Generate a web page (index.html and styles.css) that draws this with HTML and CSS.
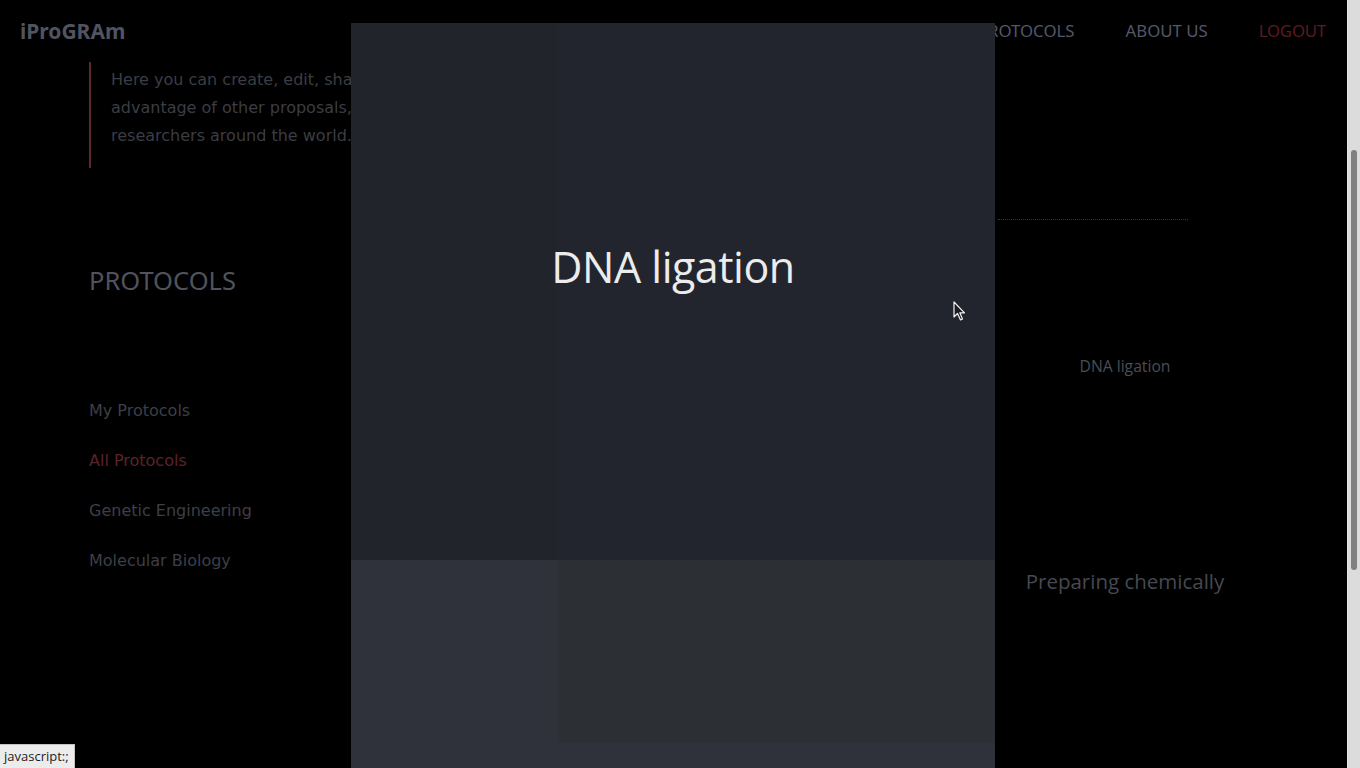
FILE: index.html
```html
<!DOCTYPE html>
<html lang="en">
<head>
<meta charset="utf-8">
<title>iProGRAm - Protocols</title>
<link rel="stylesheet" href="styles.css">
</head>
<body>
<div class="page">
  <header class="topbar">
    <a class="logo" href="#">iProGRAm</a>
    <nav class="mainnav">
      <a href="#">PROTOCOLS</a>
      <a href="#">ABOUT US</a>
      <a href="#" class="logout">LOGOUT</a>
    </nav>
  </header>
  <main class="main">
    <aside class="side">
      <blockquote class="intro">Here you can create, edit, share and take advantage of other proposals, made by other researchers around the world.</blockquote>
      <h2 class="side-title">PROTOCOLS</h2>
      <ul class="side-links">
        <li><a href="#">My Protocols</a></li>
        <li><a href="#" class="active">All Protocols</a></li>
        <li><a href="#">Genetic Engineering</a></li>
        <li><a href="#">Molecular Biology</a></li>
      </ul>
    </aside>
    <section class="middle"></section>
    <section class="cards">
      <div class="dots"></div>
      <div class="card card-first"><span class="card-title">DNA ligation</span></div>
      <div class="card card-second"><span class="card-title big">Preparing chemically</span></div>
    </section>
  </main>
</div>
<div class="scrollbar"><div class="thumb"></div></div>

<div class="modal">
  <div class="modal-top">
    <h1 class="modal-title">DNA ligation</h1>
  </div>
  <div class="modal-bottom">
    <div class="modal-row">
      <div class="modal-left"></div>
      <div class="modal-right"></div>
    </div>
  </div>
</div>

<svg class="cursor" width="14" height="21" viewBox="0 0 14 21">
  <path d="M1 1 L1 16 L4.5 12.5 L7.5 19 L9.5 18 L6.8 11.8 L11.5 11.8 Z" fill="#1c1d22" stroke="#f2f2f2" stroke-width="1.2" stroke-linejoin="round"/>
</svg>

<div class="status">javascript:;</div>
</body>
</html>
```

FILE: styles.css
```css
html, body {
  margin: 0;
  padding: 0;
  height: 100%;
}
body {
  background: #000;
  display: flex;
  overflow: hidden;
  font-family: "DejaVu Sans", sans-serif;
}
a { text-decoration: none; }

.page {
  flex: 1;
  min-width: 0;
}

.scrollbar {
  width: 13px;
  height: 768px;
  background: #dcdcdc;
  border-left: 1px solid #e6e6e6;
  box-sizing: border-box;
  padding-top: 150px;
}
.thumb {
  width: 6px;
  margin-left: 3px;
  height: 420px;
  background: #808080;
  border-radius: 3px;
}

.topbar {
  height: 61px;
  display: flex;
  align-items: center;
  justify-content: space-between;
  padding: 0 21px 0 20px;
}
.logo {
  font-family: "Noto Sans", sans-serif;
  font-weight: 700;
  font-size: 21px;
  color: #505461;
  letter-spacing: 0;
}
.mainnav {
  display: flex;
  gap: 51px;
}
.mainnav a {
  font-family: "Noto Sans", sans-serif;
  font-size: 16.8px;
  color: #53576a;
}
.mainnav a.logout { color: #5a1b20; letter-spacing: -0.2px; }

.main {
  display: flex;
  padding: 1px 95px 0 89px;
}
.side {
  width: 262px;
  flex: none;
}
.intro {
  margin: 0;
  border-left: 2px solid #5a2a2e;
  padding: 4px 0 18px 20px;
  font-size: 16px;
  line-height: 28px;
  color: #3b3d45;
  width: 420px;
}
.side-title {
  margin: 96px 0 0;
  font-family: "Noto Sans", sans-serif;
  font-weight: 400;
  font-size: 25.5px;
  line-height: 32px;
  color: #50535e;
}
.side-links {
  list-style: none;
  margin: 90px 0 0;
  padding: 0;
}
.side-links li {
  line-height: 50px;
  font-size: 16px;
}
.side-links a { color: #3d3f48; }
.side-links a.active { color: #5b2328; }

.middle { flex: 1; }

.cards {
  width: 254px;
  flex: none;
  display: flex;
  flex-direction: column;
}
.dots {
  margin-top: 157px;
  width: 190px;
  border-top: 1px dotted #333;
}
.card {
  text-align: center;
  font-family: "Open Sans", sans-serif;
}
.card-first { margin-top: 134px; }
.card-title {
  display: block;
  font-size: 15.7px;
  line-height: 24px;
  color: #4a4d55;
}
.card-second { margin-top: 188px; }
.card-title.big {
  font-size: 20.5px;
  line-height: 30px;
  color: #464950;
}

.modal {
  position: fixed;
  left: 351px;
  top: 23px;
  width: 644px;
  bottom: 0;
  display: flex;
  flex-direction: column;
}
.modal-top {
  height: 537px;
  background: linear-gradient(to right, #21242b 207px, #22252d 207px);
  padding-top: 216px;
  box-sizing: border-box;
}
.modal-title {
  margin: 0;
  text-align: center;
  font-family: "Open Sans", sans-serif;
  font-weight: 400;
  font-size: 43px;
  line-height: 56px;
  color: #ececec;
  letter-spacing: -0.5px;
}
.modal-bottom {
  flex: 1;
  background: #2f323b;
}
.modal-row {
  display: flex;
  height: 183px;
}
.modal-left { width: 207px; }
.modal-right {
  flex: 1;
  background: #2c2f33;
}

.cursor {
  position: fixed;
  left: 953px;
  top: 301px;
}

.status {
  position: fixed;
  left: 0;
  bottom: 0;
  height: 24px;
  padding: 0 5px 0 4px;
  box-sizing: border-box;
  background: #ececec;
  border: 1px solid #c4c4c4;
  border-left: none;
  border-bottom: none;
  font-family: "Open Sans", sans-serif;
  font-size: 13px;
  line-height: 23px;
  color: #1d1d1d;
}
```
